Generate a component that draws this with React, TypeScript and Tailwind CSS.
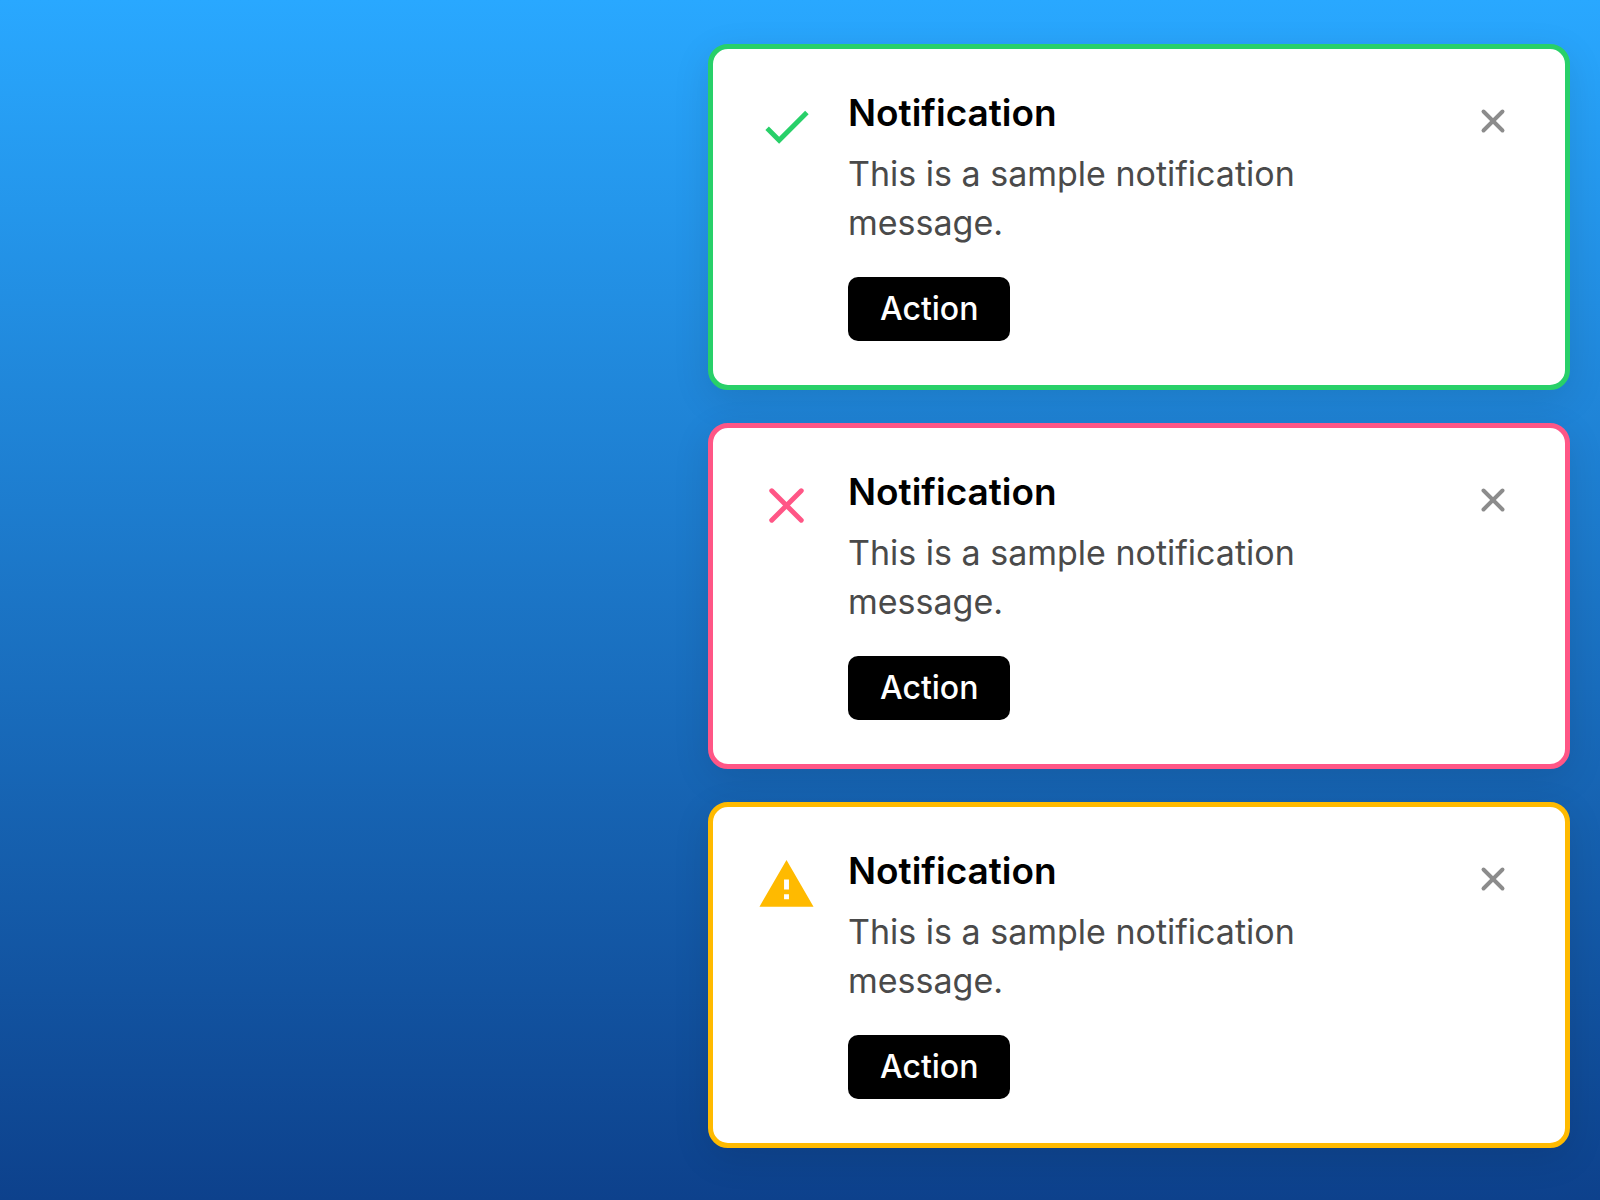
import { X } from "lucide-react";
import { MdCheck, MdWarning } from "react-icons/md";

const notifications = [
  {
    id: "success",
    border: "border-[#28d069]",
    icon: <MdCheck className="size-[59px] text-[#28d069]" />,
  },
  {
    id: "error",
    border: "border-[#ff5686]",
    icon: <X className="size-[59px] text-[#ff5686]" />,
  },
  {
    id: "warning",
    border: "border-[#ffba00]",
    icon: <MdWarning className="size-[59px] text-[#ffba00]" />,
  },
];

export default function App() {
  return (
    <main className="flex min-h-screen justify-end bg-linear-to-b/srgb from-[#29a8ff] to-[#0d418c] px-[30px] py-11 font-['Inter',sans-serif]">
      <div className="flex w-full max-w-[862px] flex-col gap-[33px]">
        {notifications.map(({ id, border, icon }) => (
          <section
            key={id}
            className={`flex items-start rounded-[20px] border-5 bg-white p-11 shadow-[0_10px_37px_rgba(0,0,0,0.1)] ${border}`}
          >
            <div className="mt-1 mr-8 shrink-0">{icon}</div>
            <div className="flex-1">
              <h2 className="text-[37px] leading-10 font-semibold text-black">
                Notification
              </h2>
              <p className="mt-4 max-w-[520px] text-[34px] leading-[49px] text-[#4a4a4a]">
                This is a sample notification message.
              </p>
              <button className="mt-[30px] block h-16 rounded-[10px] bg-black px-8 text-[32px] font-medium text-white">
                Action
              </button>
            </div>
            <button aria-label="Close" className="m-[9px] shrink-0 text-[#8c8c8c]">
              <X className="size-[38px]" strokeWidth={2.5} />
            </button>
          </section>
        ))}
      </div>
    </main>
  );
}
